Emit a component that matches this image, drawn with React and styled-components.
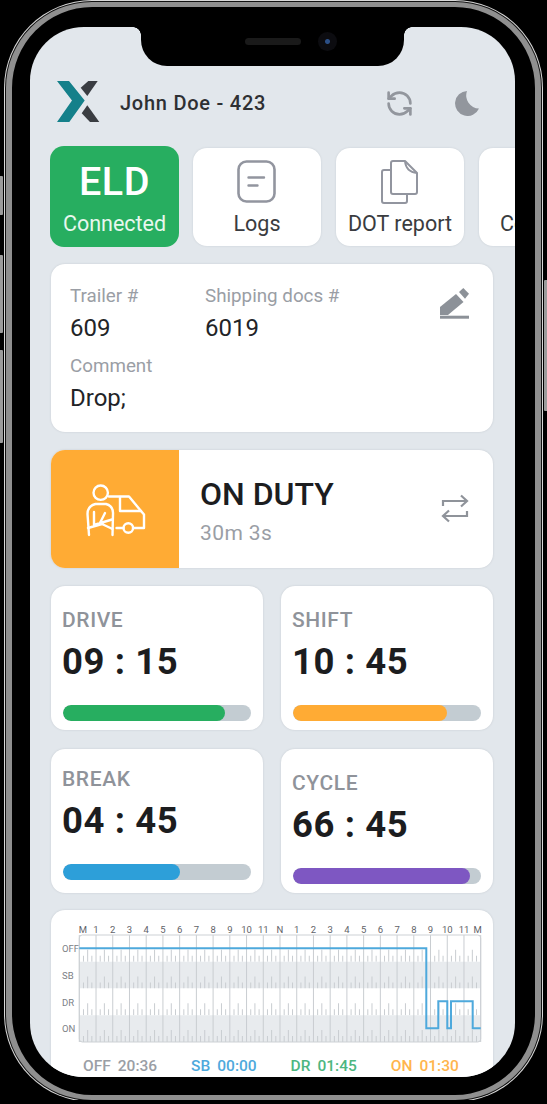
import styled, { createGlobalStyle } from 'styled-components'
import { RefreshCcw } from 'lucide-react'

const hours = ['M', '1', '2', '3', '4', '5', '6', '7', '8', '9', '10', '11', 'N', '1', '2', '3', '4', '5', '6', '7', '8', '9', '10', '11', 'M']
const rows = ['OFF', 'SB', 'DR', 'ON']

const GRID_X = 19.3
const GRID_Y = 12
const HOUR_W = 16.725
const ROW_H = 26.75

const logLine = 'M19.3 25.3 H366.3 V105.3 H378.3 V78.3 H387.3 V105.3 H391 V78.3 H412.7 V105.3 H420.7'

function LogGrid() {
    const quarters = Array.from({ length: 96 }, (_, i) => i).filter(i => i % 4 !== 0)
    return (
        <ChartSvg viewBox="0 0 425 126" width="425" height="126">
            {hours.map((hour, i) => {
                let x = GRID_X + i * HOUR_W
                if (i === 0) x += 3.5
                if (i === 24) x -= 3
                return <text key={i} x={x} y="9.5" textAnchor="middle" fontSize="9.5" fill="#5f6369">{hour}</text>
            })}
            {rows.map((row, i) => (
                <g key={row}>
                    <rect x={GRID_X} y={GRID_Y + i * ROW_H} width={HOUR_W * 24} height={ROW_H} fill={i % 2 ? '#e8ebee' : '#ffffff'} />
                    <text x="2" y={GRID_Y + i * ROW_H + 17} fontSize="9.5" fill="#7c8086">{row}</text>
                    {quarters.map(q => {
                        const x = GRID_X + q * HOUR_W / 4
                        const bottom = GRID_Y + (i + 1) * ROW_H
                        return <line key={q} x1={x} x2={x} y1={bottom - (q % 2 ? 6 : 12)} y2={bottom} stroke="#c9cdd1" strokeWidth="1" />
                    })}
                </g>
            ))}
            {hours.map((_, i) => {
                const x = GRID_X + i * HOUR_W
                return <line key={i} x1={x} x2={x} y1={GRID_Y} y2={GRID_Y + ROW_H * 4} stroke="#c9cdd1" strokeWidth="1" />
            })}
            <rect x={GRID_X} y={GRID_Y} width={HOUR_W * 24} height={ROW_H * 4} rx="3" fill="none" stroke="#cdd1d5" />
            <path d={logLine} fill="none" stroke="#4ea9dc" strokeWidth="2" />
        </ChartSvg>
    )
}

function TruckDriverIcon() {
    return (
        <svg width="70" height="65" viewBox="0 0 70 65" fill="none" stroke="#fff" strokeWidth="2.4" strokeLinecap="round" strokeLinejoin="round">
            <circle cx="21.7" cy="16.7" r="7.2" />
            <path d="M10 59 L8.5 38 Q8.5 30 16.5 28 H27 Q34.5 30 34 38 L33.5 59" />
            <path d="M15 36 V49 L33 43.5 M21 47 L26 37 M9 52 L23 48 L33.5 53" />
            <path d="M30 20.5 H50 L62 35 L65 38.5 V52 H54" />
            <path d="M41 21 V35 H62" />
            <circle cx="49.3" cy="52" r="4.8" />
            <path d="M37.5 52 H44.5" />
        </svg>
    )
}

export default function App() {
    return (
        <>
            <GlobalStyle />
            <Phone>
                <SideButton $side="left" $top={176} $height={39} />
                <SideButton $side="left" $top={255} $height={78} />
                <SideButton $side="left" $top={350} $height={93} />
                <SideButton $side="right" $top={280} $height={131} />
                <Screen>
                    <Notch>
                        <Speaker />
                        <Camera />
                    </Notch>
                    <Header>
                        <Brand>
                            <svg width="43" height="42" viewBox="0 0 43 42">
                                <path d="M0 0 H12 L27.7 19.5 L12.3 41 H0 L15 19.5 Z" fill="#14808a" />
                                <path d="M23.7 6.7 L31.3 0 H40.7 L30.3 15 Z" fill="#3a3d42" />
                                <path d="M30.3 24.3 L42.3 41 H33 L24.7 32.3 Z" fill="#3a3d42" />
                            </svg>
                            <DriverName>John Doe - 423</DriverName>
                        </Brand>
                        <HeaderActions>
                            <RefreshCcw size={29} color="#92969d" strokeWidth={2.2} />
                            <svg width="24" height="25" viewBox="0 0 24 25">
                                <path d="M12 0 A12.5 12.5 0 1 0 24 17.5 A13 13 0 0 1 12 0 Z" fill="#92969d" />
                            </svg>
                        </HeaderActions>
                    </Header>

                    <TileRow>
                        <EldTile>
                            <EldTitle>ELD</EldTitle>
                            <EldStatus>Connected</EldStatus>
                        </EldTile>
                        <Tile>
                            <TileIcon>
                                <svg width="40" height="44" viewBox="0 0 40 44" fill="none" stroke="#92959f" strokeLinecap="round">
                                    <rect x="1.5" y="1.5" width="36" height="40" rx="8" strokeWidth="2.6" />
                                    <path d="M11.5 17.5 H27 M11.5 25.5 H20.5" strokeWidth="2.4" />
                                </svg>
                            </TileIcon>
                            <TileLabel>Logs</TileLabel>
                        </Tile>
                        <Tile>
                            <TileIcon>
                                <svg width="38" height="44" viewBox="0 0 38 44" fill="none" stroke="#92959f" strokeWidth="2" strokeLinejoin="round">
                                    <path d="M10 10 H3 Q1 10 1 12 V41 Q1 43 3 43 H24 Q26 43 26 41 V34" />
                                    <path d="M12 1 H24 L36 13 V32 Q36 34 34 34 H12 Q10 34 10 32 V3 Q10 1 12 1 Z" />
                                    <path d="M24 1 Q25 12 36 13" />
                                </svg>
                            </TileIcon>
                            <TileLabel>DOT report</TileLabel>
                        </Tile>
                        <Tile>
                            <TileIcon />
                            <TileLabel>Co-driver</TileLabel>
                        </Tile>
                    </TileRow>

                    <InfoCard>
                        <InfoRow>
                            <InfoField $width="135px">
                                <InfoLabel>Trailer #</InfoLabel>
                                <InfoValue>609</InfoValue>
                            </InfoField>
                            <InfoField>
                                <InfoLabel>Shipping docs #</InfoLabel>
                                <InfoValue>6019</InfoValue>
                            </InfoField>
                        </InfoRow>
                        <InfoField>
                            <InfoLabel>Comment</InfoLabel>
                            <InfoValue>Drop;</InfoValue>
                        </InfoField>
                        <EditButton>
                            <svg width="30" height="32" viewBox="0 0 30 32" fill="#8c9198">
                                <path d="M0 28 V20 L16 7 L23.5 15 L8 28 Z" />
                                <path d="M19 5 L23.3 1 L29 6.7 L25 11.7 Z" />
                                <rect x="0" y="28.7" width="29" height="3" />
                            </svg>
                        </EditButton>
                    </InfoCard>

                    <StatusCard>
                        <StatusBadge>
                            <TruckDriverIcon />
                        </StatusBadge>
                        <StatusText>
                            <StatusTitle>ON DUTY</StatusTitle>
                            <StatusTime>30m 3s</StatusTime>
                        </StatusText>
                        <svg width="28" height="30" viewBox="0 0 28 30" fill="none" stroke="#8f939a" strokeWidth="2.2">
                            <path d="M2 12 V7 H26 M20 1.5 L26 7 L20 12.5" />
                            <path d="M26 17 V22 H2 M8 16.5 L2 22 L8 27.5" />
                        </svg>
                    </StatusCard>

                    <TimerGrid>
                        <TimerCard>
                            <TimerLabel>DRIVE</TimerLabel>
                            <TimerValue>09 : 15</TimerValue>
                            <Bar><BarFill $color="#27ae60" $value={86} /></Bar>
                        </TimerCard>
                        <TimerCard>
                            <TimerLabel>SHIFT</TimerLabel>
                            <TimerValue>10 : 45</TimerValue>
                            <Bar><BarFill $color="#ffab34" $value={82} /></Bar>
                        </TimerCard>
                        <TimerCard $tight>
                            <TimerLabel>BREAK</TimerLabel>
                            <TimerValue>04 : 45</TimerValue>
                            <Bar><BarFill $color="#2d9fd9" $value={62} /></Bar>
                        </TimerCard>
                        <TimerCard>
                            <TimerLabel>CYCLE</TimerLabel>
                            <TimerValue>66 : 45</TimerValue>
                            <Bar><BarFill $color="#7e57c2" $value={94} /></Bar>
                        </TimerCard>
                    </TimerGrid>

                    <ChartCard>
                        <LogGrid />
                        <Legend>
                            <LegendItem $color="#9a9ea5"><span>OFF</span><span>20:36</span></LegendItem>
                            <LegendItem $color="#4ea9dc"><span>SB</span><span>00:00</span></LegendItem>
                            <LegendItem $color="#4db67f"><span>DR</span><span>01:45</span></LegendItem>
                            <LegendItem $color="#ffb54d"><span>ON</span><span>01:30</span></LegendItem>
                        </Legend>
                    </ChartCard>
                </Screen>
            </Phone>
        </>
    )
}

const GlobalStyle = createGlobalStyle`
    html, body {
        margin: 0;
        padding: 0;
        background: #000;
        overflow: hidden;
    }
    * {
        box-sizing: border-box;
    }
    body {
        font-family: Roboto, "Liberation Sans", sans-serif;
    }
`

const Phone = styled.div`
    position: relative;
    box-sizing: border-box;
    width: 535px;
    height: 1098px;
    margin: 2px 0 0 6px;
    padding: 20px 20px 18px 18px;
    border: 5px solid #8f8f8f;
    border-left-width: 6px;
    border-right-width: 6px;
    border-radius: 86px;
    background: #000;
    box-shadow: 0 0 0 1px #111, 0 0 0 2px #d8d8d8;
`

const SideButton = styled.div`
    position: absolute;
    ${p => p.$side === 'left' ? 'left: -14px;' : 'right: -14px;'}
    top: ${p => p.$top - 7}px;
    width: 5px;
    height: ${p => p.$height}px;
    background: #9c9c9c;
    border-radius: 1px;
`

const Screen = styled.div`
    position: relative;
    height: 1050px;
    padding: 53px 22px 0 21px;
    background: #e2e7ec;
    border-radius: 54px;
    overflow: hidden;
`

const Notch = styled.div`
    position: absolute;
    top: 0;
    left: 111px;
    width: 263px;
    height: 39px;
    display: flex;
    align-items: center;
    justify-content: center;
    gap: 17px;
    padding-left: 37px;
    padding-bottom: 10px;
    background: #000;
    border-radius: 0 0 26px 26px;
    &::before, &::after {
        content: "";
        position: absolute;
        top: 0;
        width: 8px;
        height: 8px;
    }
    &::before {
        left: -8px;
        background: radial-gradient(circle at 0 100%, transparent 7.5px, #000 8px);
    }
    &::after {
        right: -8px;
        background: radial-gradient(circle at 100% 100%, transparent 7.5px, #000 8px);
    }
`

const Speaker = styled.div`
    width: 56px;
    height: 7px;
    border-radius: 4px;
    background: #1a1a1a;
`

const Camera = styled.div`
    width: 19px;
    height: 19px;
    border-radius: 50%;
    background: radial-gradient(circle, #2b4f86 0 2px, #0c0c10 3px);
`

const Header = styled.div`
    display: flex;
    align-items: center;
    justify-content: space-between;
    height: 43px;
    padding: 0 14px 0 6px;
`

const Brand = styled.div`
    display: flex;
    align-items: center;
    gap: 20px;
`

const DriverName = styled.div`
    font-size: 20px;
    font-weight: 500;
    color: #2e3033;
    letter-spacing: 0.75px;
    margin-top: 2px;
`

const HeaderActions = styled.div`
    display: flex;
    align-items: center;
    gap: 41px;
    margin-top: 4px;
`

const TileRow = styled.div`
    display: flex;
    align-items: center;
    gap: 15px;
    height: 101px;
    margin: 23px -22px 0 -1px;
`

const Tile = styled.div`
    flex: 0 0 128px;
    height: 98px;
    display: flex;
    flex-direction: column;
    align-items: center;
    background: #fff;
    border-radius: 14px;
    box-shadow: 0 0 2px rgba(120, 130, 140, 0.25);
`

const EldTile = styled.div`
    flex: 0 0 129px;
    height: 101px;
    margin-right: -1px;
    display: flex;
    flex-direction: column;
    align-items: center;
    color: #fff;
    background: #27ae60;
    border-radius: 14px;
`

const EldTitle = styled.div`
    font-size: 39.5px;
    font-weight: 500;
    line-height: 44px;
    margin-top: 14px;
    letter-spacing: 0.5px;
`

const EldStatus = styled.div`
    font-size: 21.5px;
    line-height: 26px;
    margin-top: 7px;
    color: #e8f7ee;
`

const TileIcon = styled.div`
    height: 44px;
    margin-top: 12px;
    display: flex;
    justify-content: center;
`

const TileLabel = styled.div`
    font-size: 21.5px;
    line-height: 24px;
    margin-top: 8px;
    color: #3a3c40;
    white-space: nowrap;
`

const InfoCard = styled.div`
    position: relative;
    height: 168px;
    margin-top: 17px;
    padding: 21px 19px;
    background: #fff;
    border-radius: 14px;
    box-shadow: 0 0 2px rgba(120, 130, 140, 0.3);
`

const InfoRow = styled.div`
    display: flex;
    margin-bottom: 13px;
`

const InfoField = styled.div`
    width: ${p => p.$width || 'auto'};
`

const InfoLabel = styled.div`
    font-size: 18.8px;
    line-height: 22px;
    color: #9a9ea5;
`

const InfoValue = styled.div`
    font-size: 24px;
    line-height: 28px;
    margin-top: 7px;
    color: #222427;
`

const EditButton = styled.div`
    position: absolute;
    top: 23px;
    right: 23px;
    line-height: 0;
`

const StatusCard = styled.div`
    display: flex;
    align-items: center;
    height: 118px;
    margin-top: 18px;
    padding-right: 24px;
    background: #fff;
    border-radius: 14px;
    overflow: hidden;
    box-shadow: 0 0 2px rgba(120, 130, 140, 0.3);
`

const StatusBadge = styled.div`
    flex: 0 0 128px;
    align-self: stretch;
    display: flex;
    align-items: center;
    justify-content: center;
    padding-right: 3px;
    padding-bottom: 2px;
    background: #ffab34;
`

const StatusText = styled.div`
    flex: 1;
    padding: 4px 0 0 21px;
`

const StatusTitle = styled.div`
    font-size: 32px;
    font-weight: 500;
    line-height: 36px;
    color: #1c1d1f;
`

const StatusTime = styled.div`
    font-size: 21px;
    line-height: 26px;
    margin-top: 8px;
    color: #9a9ea5;
    letter-spacing: 0.4px;
`

const TimerGrid = styled.div`
    display: grid;
    grid-template-columns: 212px 212px;
    grid-auto-rows: 144px;
    column-gap: 18px;
    row-gap: 19px;
    margin-top: 18px;
`

const TimerCard = styled.div`
    padding: ${p => (p.$tight ? '17px' : '21px')} 12px 0 12px;
    background: #fff;
    border-radius: 14px;
    box-shadow: 0 0 2px rgba(120, 130, 140, 0.3);
`

const TimerLabel = styled.div`
    font-size: 21px;
    font-weight: 500;
    line-height: 26px;
    letter-spacing: 0.6px;
    margin-left: -1px;
    color: #8f939a;
`

const TimerValue = styled.div`
    font-size: 36.5px;
    font-weight: 700;
    line-height: 44px;
    margin: 7px 0 0 -1px;
    color: #1c1d1f;
    letter-spacing: 0.6px;
`

const Bar = styled.div`
    height: 16px;
    margin-top: 21px;
    background: #c3ccd2;
    border-radius: 8px;
    overflow: hidden;
`

const BarFill = styled.div`
    width: ${p => p.$value}%;
    height: 100%;
    background: ${p => p.$color};
    border-radius: 8px;
`

const ChartCard = styled.div`
    height: 220px;
    margin-top: 17px;
    padding: 13px 0 0 9px;
    background: #fff;
    border-radius: 14px;
    box-shadow: 0 0 2px rgba(120, 130, 140, 0.3);
`

const ChartSvg = styled.svg`
    display: block;
    font-family: Roboto, "Liberation Sans", sans-serif;
`

const Legend = styled.div`
    display: flex;
    gap: 34px;
    margin-top: 8px;
    padding-left: 23px;
`

const LegendItem = styled.div`
    display: flex;
    gap: 7px;
    font-size: 15.5px;
    font-weight: 500;
    line-height: 18px;
    color: ${p => p.$color};
`
